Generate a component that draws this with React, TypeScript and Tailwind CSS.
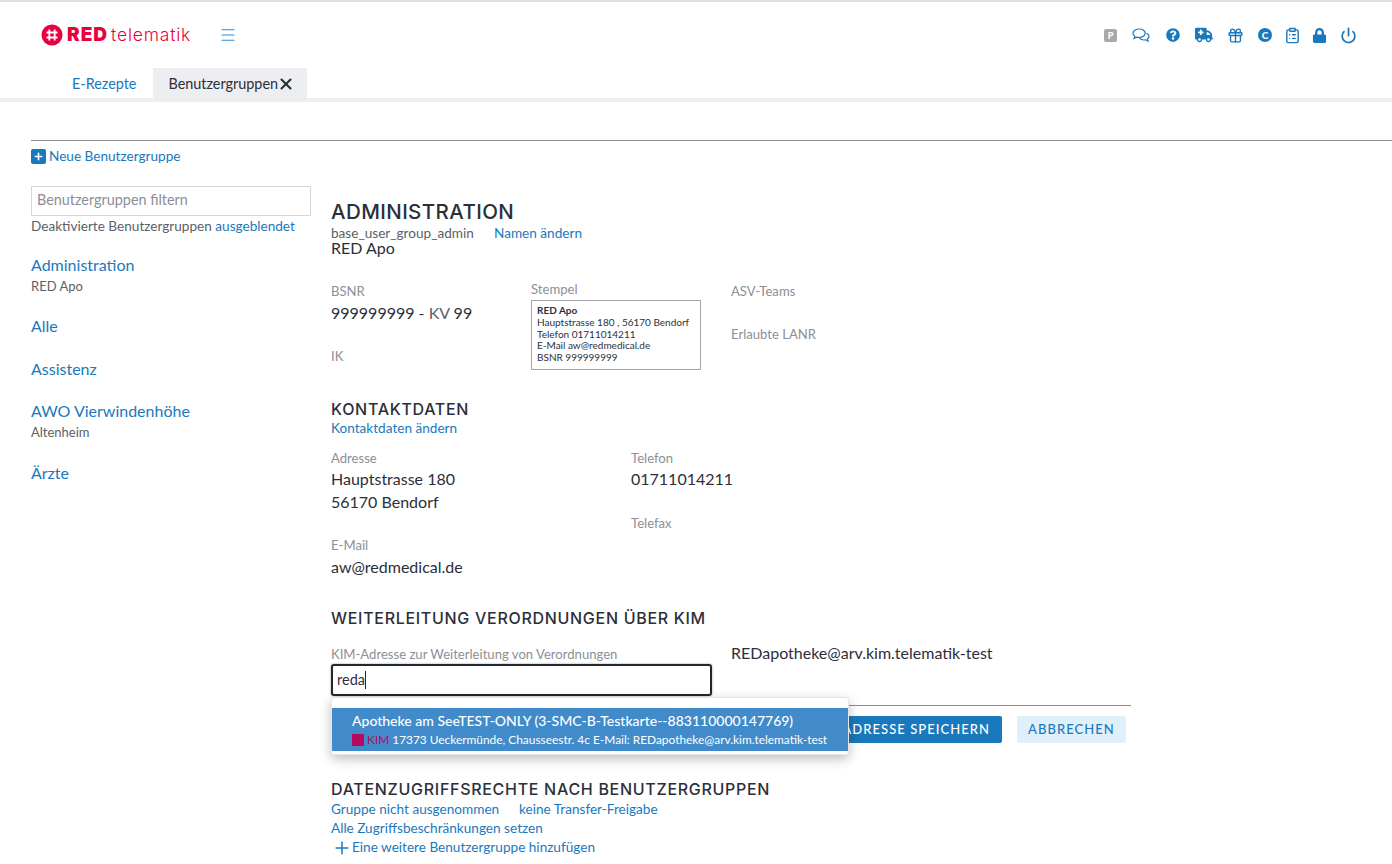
import React from 'react';
import { ClipboardList, Gift, Menu, Plus, Power, X } from 'lucide-react';
import { FaLock, FaQuestionCircle } from 'react-icons/fa';
import { FaTruckMedical } from 'react-icons/fa6';

const headingFont = "font-['Inter','Noto_Sans',sans-serif]";

const Chats = () => (
  <svg width="18" height="15" viewBox="0 0 18 15" fill="none" stroke="currentColor" strokeWidth="1.2">
    <path d="M7.2 1C3.8 1 1 2.9 1 5.3c0 1.2.7 2.2 1.8 3l-.7 2 2.6-1.1c.8.2 1.6.3 2.5.3 3.4 0 6-1.9 6-4.2S10.600 1 7.200 1z" />
    <path d="M14.500 5.200c1.500.7 2.500 1.800 2.500 3.100 0 1-.6 1.900-1.500 2.500l.6 2.300-2.500-1.300c-.6.1-1.100.2-1.700.2-1.900 0-3.500-.7-4.500-1.800" />
  </svg>
);

const Label = ({ children, className = '' }: { children: React.ReactNode; className?: string }) => (
  <div className={`text-[13.100px] leading-[18px] text-[#8c8f96] ${className}`}>{children}</div>
);

const Value = ({ children }: { children: React.ReactNode }) => (
  <div className="text-[16px] leading-[23px] text-[#2b2f3a]">{children}</div>
);

const Heading = ({ children, className = '' }: { children: React.ReactNode; className?: string }) => (
  <h2 className={`${headingFont} pb-[2px] text-[16px] leading-[16px] font-medium tracking-[0.700px] text-[#2b2f3a] ${className}`}>
    {children}
  </h2>
);

const GroupLink = ({ name, sub, className = 'mb-[20px]' }: { name: string; sub?: string; className?: string }) => (
  <div className={className}>
    <div className="text-[16px] leading-[22px] text-[#1a78bd]">{name}</div>
    {sub && <div className="text-[13px] leading-[20px] text-[#5c5f66]">{sub}</div>}
  </div>
);

export default function App() {
  return (
    <div className="min-h-[864px] overflow-hidden bg-white font-['Lato','Open_Sans',sans-serif] text-[#2b2f3a]">
      <div className="h-[2px] bg-[#dedede]" />

      {/* header */}
      <header className="flex h-[66px] items-start justify-between pt-[21px] pl-[41px] pr-[35px]">
        <div className="flex items-center">
          <svg width="22" height="22" viewBox="0 0 22 22">
            <circle cx="11" cy="11" r="10.500" fill="#e8003f" />
            <path d="M8.300 5.500v11M13.700 5.500v11M5.500 8.500h11M5.500 13.500h11" stroke="#fff" strokeWidth="1.800" />
          </svg>
          <span className={`${headingFont} ml-[4px] text-[19px] leading-[24px] font-black tracking-[1px] text-[#e8003f]`}>RED</span>
          <span className={`${headingFont} ml-[3px] text-[17.500px] leading-[24px] font-light tracking-[0.800px] text-[#e8003f]`}>telematik</span>
          <Menu size={18} strokeWidth={1.500} className="ml-[28px] text-[#2f8bd0]" />
        </div>
        <div className="flex items-center pt-[3px] text-[#1a78bd]">
          <span className="flex h-[13px] w-[13px] items-center justify-center rounded-[2px] bg-[#a9a9a9] text-[9px] font-black leading-none text-white">P</span>
          <span className="ml-[15px]"><Chats /></span>
          <FaQuestionCircle size={14} className="ml-[16px]" />
          <FaTruckMedical size={18} className="ml-[15px]" />
          <Gift size={17} strokeWidth={2} className="ml-[14px]" />
          <span className="ml-[14px] flex h-[14px] w-[14px] items-center justify-center rounded-full bg-[#1a78bd] text-[10px] font-black leading-none text-white">C</span>
          <ClipboardList size={17} strokeWidth={2} className="ml-[12px]" />
          <FaLock size={15} className="ml-[11px]" />
          <Power size={17} strokeWidth={2.500} className="ml-[13px]" />
        </div>
      </header>

      {/* tabs */}
      <nav className="flex h-[30px] pl-[56px] text-[14.400px]">
        <div className="flex items-center pl-[16px] pr-[17px] pt-[1px] text-[#1a78bd]">E-Rezepte</div>
        <div className="flex w-[154px] items-center bg-[#edeef2] pl-[15px] pt-[1px] text-[#2b2f3a]">
          Benutzergruppen
          <X size={18} strokeWidth={2.800} className="ml-[-1px] shrink-0" />
        </div>
      </nav>
      <div className="h-[4px] bg-[#edeef2]" />

      <div className="pl-[31px] pt-[38px]">
        <div className="h-px bg-[#8a8c96]" />
        <div className="mt-[7px] flex items-center text-[13.600px] leading-[16px] text-[#1a78bd]">
          <span className="mr-[3px] flex h-[15px] w-[15px] items-center justify-center rounded-[2px] bg-[#1a78bd] text-white">
            <Plus size={11} strokeWidth={3.500} />
          </span>
          Neue Benutzergruppe
        </div>

        <div className="mt-[22px] flex">
          {/* sidebar */}
          <aside className="mr-[20px] w-[280px] shrink-0">
            <div className="flex h-[30px] items-center border border-[#d5d6da] px-[5px] pb-[2px] text-[14.400px] text-[#8c8f96]">
              Benutzergruppen filtern
            </div>
            <div className="text-[13.600px] leading-[20px] text-[#5c5f66]">
              Deaktivierte Benutzergruppen <span className="text-[#1a78bd]">ausgeblendet</span>
            </div>
            <div className="mt-[18px]">
              <GroupLink name="Administration" sub="RED Apo" className="mb-[19px]" />
              <GroupLink name="Alle" className="mb-[21px]" />
              <GroupLink name="Assistenz" />
              <GroupLink name="AWO Vierwindenhöhe" sub="Altenheim" />
              <GroupLink name="Ärzte" />
            </div>
          </aside>

          {/* main */}
          <main className="w-[800px] shrink-0">
            <h1 className={`${headingFont} mt-[14px] text-[20.500px] leading-[24px] font-medium tracking-[0.400px] text-[#2b2f3a]`}>ADMINISTRATION</h1>
            <div className="mt-[2px] flex text-[13.600px] leading-[14px] text-[#5c5f66]">
              <span className="w-[163px]">base_user_group_admin</span>
              <span className="text-[#1a78bd]">Namen ändern</span>
            </div>
            <div className="text-[16px] leading-[16px]">RED Apo</div>

            <div className="mt-[24px] grid h-[100px] grid-cols-[200px_200px_200px]">
              <div>
                <Label className="mt-[2px]">BSNR</Label>
                <div className="mt-[1px]"><Value>999999999 - <span className="text-[#5c5f66]">KV</span> 99</Value></div>
                <Label className="mt-[23px]">IK</Label>
              </div>
              <div>
                <Label>Stempel</Label>
                <div className="mt-[2px] h-[70px] w-[170px] border border-[#a3a5ab] px-[5px] py-[4px] text-[10px] leading-[11.800px] text-[#2b2f3a]">
                  <div className="font-bold">RED Apo</div>
                  <div>Hauptstrasse 180 , 56170 Bendorf</div>
                  <div>Telefon 01711014211</div>
                  <div>E-Mail aw@redmedical.de</div>
                  <div>BSNR 999999999</div>
                </div>
              </div>
              <div>
                <Label className="mt-[2px]">ASV-Teams</Label>
                <Label className="mt-[25px]">Erlaubte LANR</Label>
              </div>
            </div>

            <Heading className="mt-[21px]">KONTAKTDATEN</Heading>
            <div className="text-[13.600px] leading-[18px] text-[#1a78bd]">Kontaktdaten ändern</div>

            <div className="mt-[12px] grid grid-cols-[300px_300px]">
              <div>
                <Label>Adresse</Label>
                <Value>Hauptstrasse 180</Value>
                <Value>56170 Bendorf</Value>
              </div>
              <div>
                <Label>Telefon</Label>
                <Value>01711014211</Value>
                <Label className="mt-[24px]">Telefax</Label>
              </div>
            </div>
            <Label className="mt-[4px]">E-Mail</Label>
            <div className="mt-[1px]"><Value>aw@redmedical.de</Value></div>

            <Heading className="mt-[32px]">WEITERLEITUNG VERORDNUNGEN ÜBER KIM</Heading>

            <div className="mt-[17px] flex">
              <div className="relative w-[381px]">
                <Label>KIM-Adresse zur Weiterleitung von Verordnungen</Label>
                <div className="mt-[1px] flex h-[32px] items-center rounded-[3px] border-2 border-[#23262e] pl-[4px] text-[14.500px] shadow-[0_0_2px_#888]">
                  reda<span className="h-[18px] w-px bg-[#23262e]" />
                </div>
                {/* autocomplete menu */}
                <div className="absolute left-0 top-[52px] z-10 h-[58px] w-[518px] rounded-[3px] border border-[#e6e6e8] bg-white pt-[10px] shadow-[0_4px_12px_rgba(0,0,0,0.25)]">
                  <div className="h-[43px] bg-[#418bcb] pl-[20px] pt-[3px] text-white">
                    <div className="text-[14px] leading-[20px] font-medium whitespace-nowrap">Apotheke am SeeTEST-ONLY (3-SMC-B-Testkarte--883110000147769)</div>
                    <div className="flex items-center text-[11.900px] leading-[17px] whitespace-nowrap">
                      <span className="h-[12px] w-[12px] bg-[#b8075f]" />
                      <span className="ml-[3px] text-[#b8075f]">KIM</span>
                      <span className="ml-[3px]">17373 Ueckermünde, Chausseestr. 4c E-Mail: REDapotheke@arv.kim.telematik-test</span>
                    </div>
                  </div>
                </div>
              </div>
              <div className="ml-[19px] text-[16px] leading-[16px]">REDapotheke@arv.kim.telematik-test</div>
            </div>

            <div className="mt-[9px] h-px bg-[#8a8c96]" />
            <div className="mt-[10px] flex justify-end pr-[5px] text-[13px] font-medium tracking-[1.050px]">
              <button className="flex h-[27px] items-center rounded-[2px] bg-[#1a78bd] pl-[14px] pr-[12px] text-white">ADRESSE SPEICHERN</button>
              <button className="ml-[15px] flex h-[27px] w-[109px] items-center justify-center rounded-[2px] bg-[#dff0fb] text-[#1a78bd]">ABBRECHEN</button>
            </div>

            <Heading className="mt-[38px]">DATENZUGRIFFSRECHTE NACH BENUTZERGRUPPEN</Heading>
            <div className="mt-[1px] flex text-[13.600px] leading-[19px] text-[#1a78bd]">
              <span className="w-[188px]">Gruppe nicht ausgenommen</span>
              <span>keine Transfer-Freigabe</span>
            </div>
            <div className="text-[13.600px] leading-[19px] text-[#1a78bd]">Alle Zugriffsbeschränkungen setzen</div>
            <div className="flex h-[19px] items-center pl-[1px] text-[13.600px] leading-[19px] text-[#1a78bd]">
              <Plus size={20} strokeWidth={1.800} />
              Eine weitere Benutzergruppe hinzufügen
            </div>
          </main>
        </div>
      </div>
    </div>
  );
}
